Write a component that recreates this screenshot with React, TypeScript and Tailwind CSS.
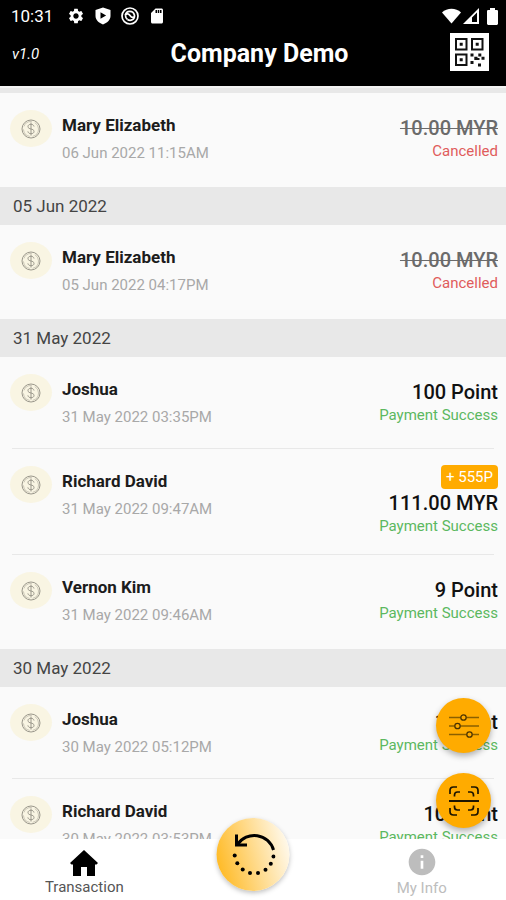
import { MdInfo, MdSdCard, MdSettings } from 'react-icons/md'

interface Transaction {
  name: string
  time: string
  amount: string
  cancelled?: boolean
  bonus?: string
}

interface DayGroup {
  date: string | null
  items: Transaction[]
}

const groups: DayGroup[] = [
  {
    date: null,
    items: [{ name: 'Mary Elizabeth', time: '06 Jun 2022 11:15AM', amount: '10.00 MYR', cancelled: true }],
  },
  {
    date: '05 Jun 2022',
    items: [{ name: 'Mary Elizabeth', time: '05 Jun 2022 04:17PM', amount: '10.00 MYR', cancelled: true }],
  },
  {
    date: '31 May 2022',
    items: [
      { name: 'Joshua', time: '31 May 2022 03:35PM', amount: '100 Point' },
      { name: 'Richard David', time: '31 May 2022 09:47AM', amount: '111.00 MYR', bonus: '+ 555P' },
      { name: 'Vernon Kim', time: '31 May 2022 09:46AM', amount: '9 Point' },
    ],
  },
  {
    date: '30 May 2022',
    items: [
      { name: 'Joshua', time: '30 May 2022 05:12PM', amount: '1 Point' },
      { name: 'Richard David', time: '30 May 2022 03:53PM', amount: '10 Point' },
    ],
  },
]

// Dotted half of the refresh icon
const refreshDots = [
  [3.2, 22.5],
  [5.8, 30.2],
  [11.2, 36.4],
  [18.5, 40],
  [26.5, 40],
  [34, 36.8],
  [39.3, 30.8],
  [42, 23.5],
]

function StatusBar() {
  return (
    <div className="flex h-8 items-center justify-between pr-2 pl-[11px]">
      <div className="flex items-center">
        <span className="w-[56px] text-[17px] leading-5">10:31</span>
        <div className="flex items-center gap-[9px]">
          <MdSettings size={18} />
          <svg width="18" height="18" viewBox="0 0 18 18" fill="currentColor">
            <path
              fillRule="evenodd"
              d="M9 .5 16.5 3v6c0 4-3.5 7-7.5 8.500C5 16 1.500 13 1.500 9V3L9 .5zM6.500 5.200v6.600l5.600-3.300z"
            />
          </svg>
          <svg width="18" height="18" viewBox="0 0 18 18" fill="none" stroke="currentColor" strokeWidth="1.7">
            <circle cx="9" cy="9" r="8" />
            <path d="M4.500 8.500C5 3 12.500 3 13.500 8.500c.3 4-4 6-7 4" />
            <path d="M4 8c2-2 4-1 5 .5s2.500 2.500 4.500 1.500M4.500 8.500c0 2 .8 3.200 2 4" />
          </svg>
          <MdSdCard size={18} />
        </div>
      </div>
      <div className="flex items-center">
        <svg width="19" height="16" viewBox="0 0 19 16" fill="currentColor">
          <path d="M0 4.500C5-.5 14-.5 19 4.500L9.500 15.500z" />
        </svg>
        <svg className="ml-[2px]" width="16" height="16" viewBox="0 0 16 16" fill="currentColor">
          <path fillRule="evenodd" d="M0 16 16 0v16H0zM9 9.500V14h5V4.500L9 9.500z" />
        </svg>
        <svg className="ml-2" width="11" height="17" viewBox="0 0 11 17" fill="currentColor">
          <path d="M3 0h5v2h2.200l.8.800V16l-1 1H1l-1-1V2.800L.8 2H3z" />
        </svg>
      </div>
    </div>
  )
}

function QrIcon() {
  return (
    <svg width="39" height="38" viewBox="0 0 39 38" fill="none">
      <path d="M0 0h39v38H0z" fill="#fff" />
      <g stroke="#111" strokeWidth="2">
        <path d="M6 6h10.500v10.500H6zM22 6h10.500v10.500H22zM6 21.500h10.500V32H6z" />
      </g>
      <g fill="#111">
        <path d="M9.700 9.700h3v3h-3zM25.700 9.700h3v3h-3zM9.700 25.200h3v3h-3z" />
        <path d="M20.500 20.500h3v3h-3zM28.300 20.500h3v3h-3zM24.300 23.700h3.200v3.200h-3.200zM31.500 23.700h3v3h-3zM27.500 25h2v2h-2zM20.500 28h3v3h-3zM28 30.500h3v3h-3z" />
      </g>
    </svg>
  )
}

function CoinIcon() {
  return (
    <span className="flex h-[37px] w-[42px] shrink-0 items-center justify-center rounded-[50%] bg-[#f9f5e3]">
      <svg width="20" height="20" viewBox="0 0 20 20" fill="none" stroke="#9a978b" strokeWidth="1">
        <circle cx="10" cy="10" r="9" />
        <circle cx="10" cy="10" r="7.5" strokeDasharray="10 3" strokeWidth=".5" />
        <path d="M13 7.500C12.500 5.800 11.500 5.300 10 5.300c-1.800 0-3 .8-3 2.300 0 3.200 6 1.600 6 4.800 0 1.500-1.200 2.300-3 2.300-1.700 0-2.800-.8-3.100-2.300M10 3.500v13" />
      </svg>
    </span>
  )
}

function TransactionRow({ item, last }: { item: Transaction; last: boolean }) {
  return (
    <li>
      <div className={`flex gap-[10px] pt-4 pr-2 pl-[10px] ${last ? 'min-h-[94px]' : 'min-h-[91px] pb-[19px]'}`}>
        <div className="pt-px">
          <CoinIcon />
        </div>
        <div className="flex-1 pt-[6px]">
          <p className="text-[17px] leading-5 font-bold text-[#1c1c1c]">{item.name}</p>
          <p className="mt-2 text-[15px] leading-5 text-[#a8a8a8]">{item.time}</p>
        </div>
        <div className={`flex flex-col items-end ${item.bonus ? '' : 'pt-[5px]'}`}>
          {item.bonus && (
            <span className="rounded bg-[#ffab00] px-[5px] text-[15px] leading-6 text-white">{item.bonus}</span>
          )}
          <span
            className={`text-[20px] leading-7 font-medium ${
              item.cancelled ? 'text-[#6b6b6b] line-through decoration-1' : 'text-[#111]'
            }`}
          >
            {item.amount}
          </span>
          <span className={`text-[15px] leading-[18px] ${item.cancelled ? 'text-[#e05c5c]' : 'text-[#5cb860]'}`}>
            {item.cancelled ? 'Cancelled' : 'Payment Success'}
          </span>
        </div>
      </div>
      {!last && <div className="mx-3 h-px bg-[#e8e8e8]" />}
    </li>
  )
}

function FilterIcon() {
  return (
    <svg width="30" height="24" viewBox="0 0 30 24" fill="none" stroke="#4a3300" strokeWidth="1.3">
      <path d="M0 3.500h11.500M17.500 3.500H30M0 12h5.500M11.500 12H30M0 20.500h17.500M23.500 20.500H30" stroke="#8a6000" />
      <circle cx="14.5" cy="3.5" r="2.7" />
      <circle cx="8.5" cy="12" r="2.7" />
      <circle cx="20.5" cy="20.5" r="2.7" />
    </svg>
  )
}

function ScanIcon() {
  return (
    <svg width="30" height="30" viewBox="0 0 30 30" fill="none" stroke="#1c1400" strokeWidth="1.7">
      <path d="M1 8V4.500Q1 1 4.500 1H8M22 1h3.500Q29 1 29 4.500V8M1 22v3.500Q1 29 4.500 29H8M22 29h3.500q3.500 0 3.500-3.500V22" />
      <path d="M5.500 10.500V9q0-3 3-3H11M19 6h2.500q3 0 3 3v1.500M5.500 19.500V21q0 3 3 3H11M19 24h2.500q3 0 3-3v-1.500" />
      <path d="M0 15h30" strokeWidth="2" />
    </svg>
  )
}

export default function App() {
  return (
    <div className="flex h-screen flex-col overflow-hidden bg-[#fafafa] font-[Roboto,sans-serif]">
      <header className="h-[86px] shrink-0 bg-black text-white">
        <StatusBar />
        <div className="grid grid-cols-[1fr_auto_1fr] items-center pt-px pr-[17px] pl-3">
          <span className="pt-1 text-[15px] leading-5 italic">v1.0</span>
          <h1 className="pt-1 pl-[18px] text-[25px] leading-8 font-bold">Company Demo</h1>
          <button type="button" aria-label="Show QR code" className="justify-self-end">
            <QrIcon />
          </button>
        </div>
      </header>

      <div className="relative min-h-0 flex-1">
        <main className="h-full overflow-hidden">
          <div className="h-[7px] border-t-2 border-[#f4f4f4] bg-[#e8e8e8]" />
          {groups.map((group) => (
            <section key={group.date ?? 'latest'}>
              {group.date && (
                <h2 className="bg-[#e8e8e8] pl-[13px] text-[17px] leading-[38px] text-[#444]">{group.date}</h2>
              )}
              <ul>
                {group.items.map((item, i) => (
                  <TransactionRow key={item.time} item={item} last={i === group.items.length - 1} />
                ))}
              </ul>
            </section>
          ))}
        </main>

        {/* Floating actions */}
        <div className="absolute right-[15px] bottom-[11px] flex flex-col gap-5">
          <button
            type="button"
            aria-label="Filter"
            className="flex size-[55px] items-center justify-center rounded-full bg-[#ffab00] shadow-[0_3px_6px_rgba(0,0,0,0.3)]"
          >
            <FilterIcon />
          </button>
          <button
            type="button"
            aria-label="Scan"
            className="flex size-[55px] items-center justify-center rounded-full bg-[#ffab00] shadow-[0_3px_6px_rgba(0,0,0,0.3)]"
          >
            <ScanIcon />
          </button>
        </div>
      </div>

      <nav className="relative grid h-[61px] shrink-0 grid-cols-3 bg-white">
        <a href="#transaction" className="flex flex-col items-center pt-[10px] text-[#555]">
          <svg width="28" height="28" viewBox="0 0 28 28" fill="#000">
            <path d="M14 1 28 14l-1.500 1.500H25V27h-8v-9h-6v9H3V15.500H1.500L0 14z" />
          </svg>
          <span className="text-[15px] leading-5">Transaction</span>
        </a>
        <span />
        <a href="#info" className="flex flex-col items-center pt-[7px] text-[#bdbdbd]">
          <MdInfo size={32} />
          <span className="text-[15px] leading-5">My Info</span>
        </a>
        <button
          type="button"
          aria-label="Refresh"
          className="absolute -top-[21px] left-1/2 flex size-[73px] -translate-x-1/2 items-center justify-center rounded-full bg-linear-[75deg] from-[#ffb412] to-white shadow-[0_2px_5px_rgba(0,0,0,0.25)]"
        >
          <svg width="44" height="44" viewBox="0 0 44 44" fill="none" stroke="#000" strokeWidth="3">
            <path d="M6 11.500A20 20 0 0 1 42 17" />
            <path d="M5 1.500V12h10.500" />
            {refreshDots.map(([cx, cy]) => (
              <circle key={cx} cx={cx} cy={cy} r="2" fill="#000" stroke="none" />
            ))}
          </svg>
        </button>
      </nav>
    </div>
  )
}
